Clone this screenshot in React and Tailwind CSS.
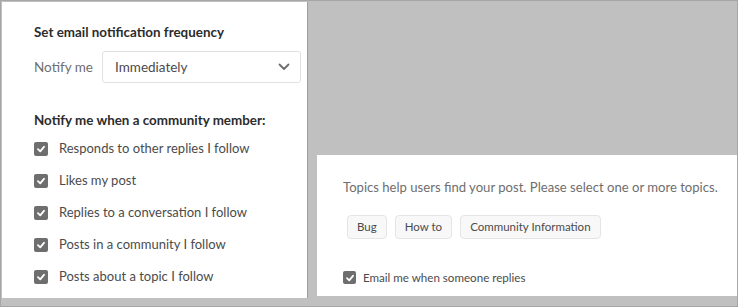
import React from 'react';

function Check({ small }) {
  return (
    <span className={`flex items-center justify-center rounded-[2px] bg-[#6e6e6e] ${small ? 'w-[13px] h-[13px]' : 'w-[14px] h-[14px]'}`}>
      <svg width="10" height="10" viewBox="0 0 10 10">
        <path d="M2 5.2 L4.2 7.3 L8 2.8" fill="none" stroke="#fff" strokeWidth="1.8" strokeLinecap="round" strokeLinejoin="round" />
      </svg>
    </span>
  );
}

const options = [
  'Responds to other replies I follow',
  'Likes my post',
  'Replies to a conversation I follow',
  'Posts in a community I follow',
  'Posts about a topic I follow',
];

export default function App() {
  return (
    <div className="w-[738px] h-[307px] bg-[#c0c0c0] border border-[#a6a6a6] flex overflow-hidden font-['Lato',sans-serif]">
      {/* Left panel */}
      <div className="w-[306px] h-[296px] ml-[1px] mt-[1px] bg-white border-r border-[#9e9e9e] pl-[32px] pt-[20px]">
        <h3 className="text-[13.4px] font-bold text-[#2c2c2c] leading-[20px]">Set email notification frequency</h3>
        <div className="flex items-center mt-[9px]">
          <span className="text-[13.5px] text-[#6e6e6e] w-[68px]">Notify me</span>
          <div className="w-[199px] h-[32px] border border-[#e1e1e1] rounded-[3px] flex items-center justify-between pl-[12px] pr-[10px]">
            <span className="text-[13.5px] text-[#4b4b4b]">Immediately</span>
            <svg width="12" height="8" viewBox="0 0 12 8">
              <path d="M1.5 1.5 L6 6 L10.5 1.5" fill="none" stroke="#6e6e6e" strokeWidth="1.8" strokeLinecap="round" strokeLinejoin="round" />
            </svg>
          </div>
        </div>
        <h3 className="text-[13.4px] font-bold text-[#2c2c2c] leading-[20px] mt-[27px]">Notify me when a community member:</h3>
        <div className="flex flex-col mt-[3px]">
          {options.map((o) => (
            <label key={o} className="flex items-center h-[32px]">
              <Check />
              <span className="ml-[11px] text-[13px] text-[#4b4b4b]">{o}</span>
            </label>
          ))}
        </div>
      </div>

      {/* Right area */}
      <div className="flex-1 flex flex-col pl-[9px] pt-[154px]">
        <div className="h-[141px] bg-white pl-[26px] pt-[22px]">
          <p className="text-[13.1px] text-[#6e6e6e] leading-[20px]">Topics help users find your post. Please select one or more topics.</p>
          <div className="flex gap-[8px] mt-[18px] ml-[4px]">
            {['Bug', 'How to', 'Community Information'].map((t) => (
              <span key={t} className="h-[24px] px-[9px] flex items-center text-[11.5px] text-[#4b4b4b] bg-[#f8f8f8] border border-[#e5e5e5] rounded-[4px]">{t}</span>
            ))}
          </div>
          <label className="flex items-center mt-[30px]">
            <Check small />
            <span className="ml-[7px] text-[11.6px] text-[#4b4b4b]">Email me when someone replies</span>
          </label>
        </div>
      </div>
    </div>
  );
}
